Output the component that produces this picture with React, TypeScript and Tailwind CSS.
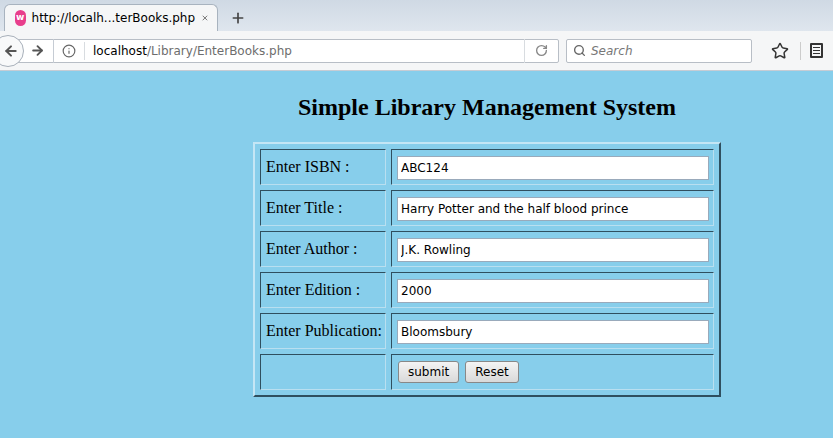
import { ArrowLeft, ArrowRight, Info, RotateCw, Search, Star, Plus, X } from "lucide-react";

const rows = [
  ["Enter ISBN :", "ABC124"],
  ["Enter Title :", "Harry Potter and the half blood prince"],
  ["Enter Author :", "J.K. Rowling"],
  ["Enter Edition :", "2000"],
  ["Enter Publication:", "Bloomsbury"],
];

const cell =
  "border border-t-[#2f4f5f] border-l-[#2f4f5f] border-b-[#b9dff0] border-r-[#b9dff0] h-[36px] p-0";

export default function App() {
  return (
    <div className="w-[833px] h-[438px] overflow-hidden bg-[#87ceeb] font-[Liberation_Serif,serif]">
      {/* tab strip */}
      <div className="h-[31px] bg-gradient-to-b from-[#cfd9e4] to-[#dfe6ee] flex items-end pl-[4px] font-[DejaVu_Sans,sans-serif]">
        <div className="w-[214px] h-[27px] bg-[#f5f6f7] rounded-t-[6px] border border-b-0 border-[#a8b3bf] flex items-center pl-[10px] pr-[8px] gap-[6px]">
          <div className="w-[16px] h-[16px] rounded-full bg-[#e83e8c] text-white text-[9px] font-bold flex items-center justify-center">w</div>
          <span className="text-[12px] text-black flex-1">http://localh...terBooks.php</span>
          <X size={12} className="text-[#777]" strokeWidth={3} />
        </div>
        <div className="h-[27px] flex items-center pl-[12px]">
          <Plus size={16} className="text-[#444]" strokeWidth={2.5} />
        </div>
      </div>
      {/* nav bar */}
      <div className="h-[40px] bg-[#f5f6f7] border-b border-[#c6ccd4] flex items-center gap-[7px] font-[DejaVu_Sans,sans-serif]">
        <div className="flex items-center h-[24px] w-[567px] bg-white border border-[#b8bec6] rounded-r-[2px] -ml-[8px]">
          <div className="w-[32px] h-[32px] rounded-full border border-[#a8b0ba] bg-[#f8f9fa] flex items-center justify-center -ml-[1px] pl-[6px]">
            <ArrowLeft size={16} strokeWidth={3} className="text-[#555]" />
          </div>
          <ArrowRight size={15} strokeWidth={3} className="text-[#555] ml-[6px]" />
          <div className="h-[24px] border-l border-[#c6ccd4] ml-[8px] pl-[8px] flex items-center gap-[8px] flex-1">
            <Info size={14} className="text-[#666]" />
            <div className="h-[18px] border-l border-[#d8dce0]" />
            <span className="text-[12px] text-black">localhost<span className="text-[#6d6d6d]">/Library/EnterBooks.php</span></span>
          </div>
          <div className="h-[24px] border-l border-[#d8dce0] w-[34px] flex items-center justify-center">
            <RotateCw size={13} className="text-[#888]" strokeWidth={2.5} />
          </div>
        </div>
        <div className="h-[24px] w-[186px] bg-white border border-[#b8bec6] rounded-[2px] flex items-center gap-[5px] pl-[6px]">
          <Search size={13} className="text-[#666]" strokeWidth={2.5} />
          <span className="text-[12px] italic text-[#777]">Search</span>
        </div>
        <Star size={18} className="text-[#333] ml-[12px]" strokeWidth={2} />
        <div className="h-[18px] border-l border-[#ccc] ml-[4px]" />
        <div className="w-[13px] h-[15px] border-2 border-[#333] rounded-[1px] flex flex-col justify-evenly px-[1px] ml-[2px]">
          <div className="h-[1.5px] bg-[#333]" />
          <div className="h-[1.5px] bg-[#333]" />
          <div className="h-[1.5px] bg-[#333]" />
        </div>
      </div>
      {/* page */}
      <div className="pl-[253px] pt-[22px]">
        <h1 className="w-[468px] text-center text-[24px] font-bold text-black leading-[28px]">
          Simple Library Management System
        </h1>
        <table className="mt-[21px] w-[468px] border-separate border-spacing-[5px] border-2 border-t-[#c4e6f5] border-l-[#c4e6f5] border-b-[#2f4f5f] border-r-[#2f4f5f]">
          <tbody>
            {rows.map(([l, v]) => (
              <tr key={l}>
                <td className={`${cell} w-[128px] pl-[5px] text-[16px] text-black whitespace-nowrap`}>{l}</td>
                <td className={`${cell} pl-[5px] pr-[4px]`}>
                  <input
                    defaultValue={v}
                    className="w-[312px] h-[24px] bg-white border border-[#9ab] px-[3px] text-[12px] text-black font-[DejaVu_Sans,sans-serif] outline-none"
                  />
                </td>
              </tr>
            ))}
            <tr>
              <td className={`${cell}`} />
              <td className={`${cell} pl-[6px]`}>
                <div className="flex gap-[6px] font-[DejaVu_Sans,sans-serif]">
                  <button className="h-[22px] px-[9px] text-[12px] text-black rounded-[3px] border border-[#888] bg-gradient-to-b from-[#f4f4f4] to-[#d9d9d9]">submit</button>
                  <button className="h-[22px] px-[9px] text-[12px] text-black rounded-[3px] border border-[#888] bg-gradient-to-b from-[#f4f4f4] to-[#d9d9d9]">Reset</button>
                </div>
              </td>
            </tr>
          </tbody>
        </table>
      </div>
    </div>
  );
}
